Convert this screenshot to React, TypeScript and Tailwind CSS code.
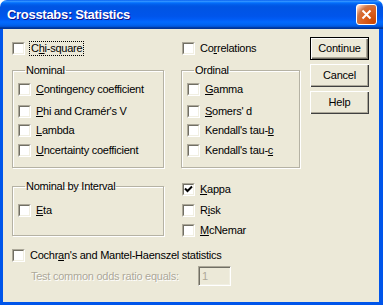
import React from "react";

type Label = [string, string, string];

function Box({ checked = false }: { checked?: boolean }) {
  return (
    <span className="block w-[13px] h-[13px] shrink-0 border border-t-[#ACA899] border-l-[#ACA899] border-r-white border-b-white">
      <span className="flex w-full h-full items-center justify-center border border-t-[#716F64] border-l-[#716F64] border-r-[#F1EFE2] border-b-[#F1EFE2] bg-white">
        {checked && (
          <svg width="9" height="9" viewBox="0 0 9 9">
            <path d="M1 3.5 L3.5 6 L8 1.5" fill="none" stroke="#000" strokeWidth="2" />
          </svg>
        )}
      </span>
    </span>
  );
}

function Text({ label }: { label: Label }) {
  return (
    <>
      {label[0]}
      <span className="underline underline-offset-[1px]">{label[1]}</span>
      {label[2]}
    </>
  );
}

function Check({
  label,
  checked = false,
  focused = false,
  className = "",
}: {
  label: Label;
  checked?: boolean;
  focused?: boolean;
  className?: string;
}) {
  return (
    <div className={"flex items-center h-[13px] " + className}>
      <Box checked={checked} />
      {focused ? (
        <span className="ml-[4px] px-[1px] h-[15px] flex items-center border border-dotted border-black">
          <Text label={label} />
        </span>
      ) : (
        <span className="ml-[5px] whitespace-nowrap">
          <Text label={label} />
        </span>
      )}
    </div>
  );
}

function Group({
  title,
  className = "",
  children,
}: {
  title: string;
  className?: string;
  children: React.ReactNode;
}) {
  return (
    <fieldset
      className={
        "border border-[#B5B2A4] shadow-[inset_1px_1px_0_#fff,1px_1px_0_#fff] pl-[5px] " + className
      }
    >
      <legend className="ml-[7px] px-[1px] leading-[13px]">{title}</legend>
      {children}
    </fieldset>
  );
}

function Button({ children, primary = false }: { children: React.ReactNode; primary?: boolean }) {
  return (
    <button
      className={
        "w-[59px] h-[23px] bg-[#ECE9D8] text-[11px] leading-[13px] tracking-[-0.2px] " +
        (primary
          ? "border border-black shadow-[inset_1px_1px_0_#fff,inset_-1px_-1px_0_#716F64,inset_-2px_-2px_0_#ACA899]"
          : "shadow-[inset_1px_1px_0_#fff,inset_-1px_-1px_0_#404040,inset_-2px_-2px_0_#ACA899]")
      }
    >
      {children}
    </button>
  );
}

export default function App() {
  return (
    <div className="w-[383px] h-[305px] flex flex-col font-['Liberation_Sans',Arial,sans-serif] text-[11px] leading-[13px] tracking-[-0.25px] text-black">
      <div className="h-[29px] shrink-0 rounded-t-[7px] flex items-center justify-between pl-[7px] pr-[6px] bg-[linear-gradient(180deg,#0058ee_0%,#3593ff_4%,#288eff_6%,#127dff_8%,#036ffc_10%,#0262ee_14%,#0057e5_20%,#0054e3_24%,#0055eb_56%,#005bf5_66%,#026afe_76%,#0062ef_86%,#0052d6_92%,#0040ab_94%,#003092_100%)]">
        <span className="text-white font-bold text-[13px] tracking-[-0.3px] [text-shadow:1px_1px_#0F1089]">
          Crosstabs: Statistics
        </span>
        <span className="w-[21px] h-[21px] rounded-[3px] border border-white flex items-center justify-center bg-[radial-gradient(circle_at_90%_90%,#cc4600_0%,#dc6527_55%,#cd7546_70%,#ffccb2_90%,#fff_100%)]">
          <svg width="11" height="11" viewBox="0 0 11 11">
            <path d="M1.5 1.5 L9.5 9.5 M9.5 1.5 L1.5 9.5" stroke="#fff" strokeWidth="2" />
          </svg>
        </span>
      </div>

      <div className="flex-1 flex bg-[#ECE9D8] border-l-[3px] border-r-[4px] border-b-[3px] border-[#0055EA]">
        <div className="w-[296px] pl-[9px] pt-[13px]">
          <div className="grid grid-cols-[152px_119px] gap-x-[17px] items-start">
            <Check label={["C", "h", "i-square"]} focused />
            <Check label={["Co", "r", "relations"]} className="ml-[1px]" />
          </div>

          <div className="grid grid-cols-[152px_119px] gap-x-[17px] items-start mt-[9px]">
            <Group title="Nominal" className="pb-[10px]">
              <Check label={["", "C", "ontingency coefficient"]} className="mt-[6px]" />
              <Check label={["", "P", "hi and Cramér's V"]} className="mt-[9px]" />
              <Check label={["", "L", "ambda"]} className="mt-[6px]" />
              <Check label={["", "U", "ncertainty coefficient"]} className="mt-[7px]" />
            </Group>
            <Group title="Ordinal" className="pb-[10px]">
              <Check label={["", "G", "amma"]} className="mt-[6px]" />
              <Check label={["", "S", "omers' d"]} className="mt-[9px]" />
              <Check label={["Kendall's tau-", "b", ""]} className="mt-[6px]" />
              <Check label={["Kendall's tau-", "c", ""]} className="mt-[7px]" />
            </Group>
          </div>

          <div className="grid grid-cols-[152px_119px] gap-x-[17px] items-start">
            <Group title="Nominal by Interval" className="mt-[12px] pb-[18px]">
              <Check label={["", "E", "ta"]} className="mt-[11px]" />
            </Group>
            <div className="ml-[1px] mt-[15px]">
              <Check label={["", "K", "appa"]} checked />
              <Check label={["R", "i", "sk"]} className="mt-[8px]" />
              <Check label={["", "M", "cNemar"]} className="mt-[7px]" />
            </div>
          </div>

          <Check label={["Cochr", "a", "n's and Mantel-Haenszel statistics"]} className="mt-[12px]" />

          <div className="flex items-center mt-[4px] pl-[19px]">
            <span className="w-[167px] text-[#ACA899] [text-shadow:1px_1px_#fff] whitespace-nowrap">
              Test common odds ratio equals:
            </span>
            <span className="w-[33px] h-[20px] flex items-center pl-[3px] text-[#ACA899] border border-t-[#ACA899] border-l-[#ACA899] border-r-white border-b-white shadow-[inset_1px_1px_0_#716F64,inset_-1px_-1px_0_#F1EFE2]">
              1
            </span>
          </div>
        </div>

        <div className="flex flex-col gap-[4px] pt-[8px] ml-[11px]">
          <Button primary>Continue</Button>
          <Button>Cancel</Button>
          <Button>Help</Button>
        </div>
      </div>
    </div>
  );
}
